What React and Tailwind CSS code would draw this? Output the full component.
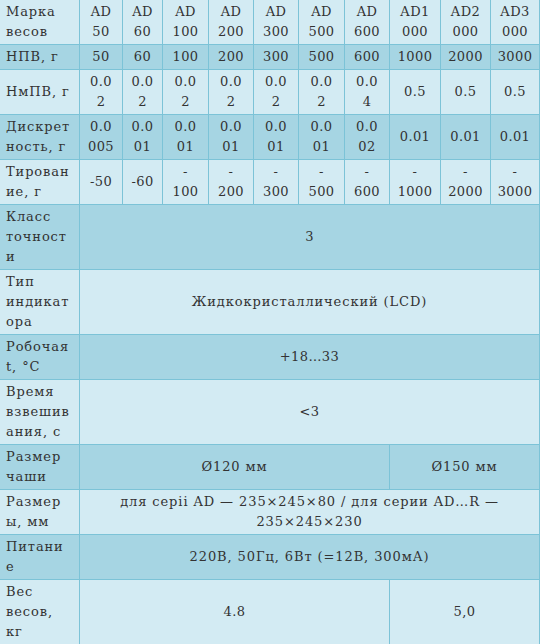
import React from 'react';

const light = 'bg-[#d3ebf3]';
const dark = 'bg-[#a6d5e3]';

const widths = [80, 43, 40, 46, 45, 45, 46, 45, 51, 50, 49];

// each cell: array of lines as in the narrow table
const header = [['AD', '50'], ['AD', '60'], ['AD', '100'], ['AD', '200'], ['AD', '300'], ['AD', '500'], ['AD', '600'], ['AD1', '000'], ['AD2', '000'], ['AD3', '000']];

const rows = [
  { label: ['НПВ, г'], cells: ['50', '60', '100', '200', '300', '500', '600', '1000', '2000', '3000'].map((c) => [c]) },
  { label: ['НмПВ, г'], cells: [['0.0', '2'], ['0.0', '2'], ['0.0', '2'], ['0.0', '2'], ['0.0', '2'], ['0.0', '2'], ['0.0', '4'], ['0.5'], ['0.5'], ['0.5']] },
  { label: ['Дискрет', 'ность, г'], cells: [['0.0', '005'], ['0.0', '01'], ['0.0', '01'], ['0.0', '01'], ['0.0', '01'], ['0.0', '01'], ['0.0', '02'], ['0.01'], ['0.01'], ['0.01']] },
  { label: ['Тирован', 'ие, г'], cells: [['-50'], ['-60'], ['-', '100'], ['-', '200'], ['-', '300'], ['-', '500'], ['-', '600'], ['-', '1000'], ['-', '2000'], ['-', '3000']] },
];

const td = 'border border-[#7cc3d7] px-[6px] py-[2px] align-middle whitespace-nowrap';
// cyrillic text in the reference runs a bit wider than the digits
const txt = `${td} tracking-[0.9px]`;

const Lines = ({ lines }) => lines.map((l, i) => (
  <React.Fragment key={i}>
    {i > 0 && <br />}
    {l}
  </React.Fragment>
));

export default function App() {
  return (
    <div className="w-[540px] h-[644px] overflow-hidden bg-[#d3ebf3] font-['DejaVu_Serif',serif] text-[13px] leading-[20px] tracking-[0.4px] text-[#333333]">
      <table className="w-[541px] table-fixed border-collapse -mt-px -ml-px">
        <colgroup>
          {widths.map((w, i) => (
            <col key={i} style={{ width: w }} />
          ))}
        </colgroup>
        <tbody>
          <tr className={light}>
            <td className={`${txt} text-left`}><Lines lines={['Марка', 'весов']} /></td>
            {header.map((m, i) => (
              <td key={i} className={`${td} text-center`}><Lines lines={m} /></td>
            ))}
          </tr>
          {rows.map((r, ri) => (
            <tr key={ri} className={ri % 2 === 0 ? dark : light}>
              <td className={`${txt} text-left`}><Lines lines={r.label} /></td>
              {r.cells.map((c, ci) => (
                <td key={ci} className={`${td} text-center`}><Lines lines={c} /></td>
              ))}
            </tr>
          ))}
          <tr className={dark}>
            <td className={txt}><Lines lines={['Класс', 'точност', 'и']} /></td>
            <td colSpan={10} className={`${td} text-center`}>3</td>
          </tr>
          <tr className={light}>
            <td className={txt}><Lines lines={['Тип', 'индикат', 'ора']} /></td>
            <td colSpan={10} className={`${txt} text-center`}>Жидкокристаллический (LCD)</td>
          </tr>
          <tr className={dark}>
            <td className={txt}><Lines lines={['Робочая', 't, °C']} /></td>
            <td colSpan={10} className={`${td} text-center`}>+18…33</td>
          </tr>
          <tr className={light}>
            <td className={txt}><Lines lines={['Время', 'взвешив', 'ания, с']} /></td>
            <td colSpan={10} className={`${td} text-center`}>&lt;3</td>
          </tr>
          <tr className={dark}>
            <td className={txt}><Lines lines={['Размер', 'чаши']} /></td>
            <td colSpan={7} className={`${txt} text-center`}>Ø120 мм</td>
            <td colSpan={3} className={`${txt} text-center`}>Ø150 мм</td>
          </tr>
          <tr className={light}>
            <td className={txt}><Lines lines={['Размер', 'ы, мм']} /></td>
            <td colSpan={10} className={`${txt} text-center`}>
              <Lines lines={['для серіі AD — 235×245×80 / для серии AD…R —', '235×245×230']} />
            </td>
          </tr>
          <tr className={dark}>
            <td className={txt}><Lines lines={['Питани', 'е']} /></td>
            <td colSpan={10} className={`${txt} text-center`}>220В, 50Гц, 6Вт (=12В, 300мА)</td>
          </tr>
          <tr className={light}>
            <td className={txt}><Lines lines={['Вес', 'весов,', 'кг']} /></td>
            <td colSpan={7} className={`${td} text-center`}>4.8</td>
            <td colSpan={3} className={`${td} text-center`}>5,0</td>
          </tr>
        </tbody>
      </table>
    </div>
  );
}
